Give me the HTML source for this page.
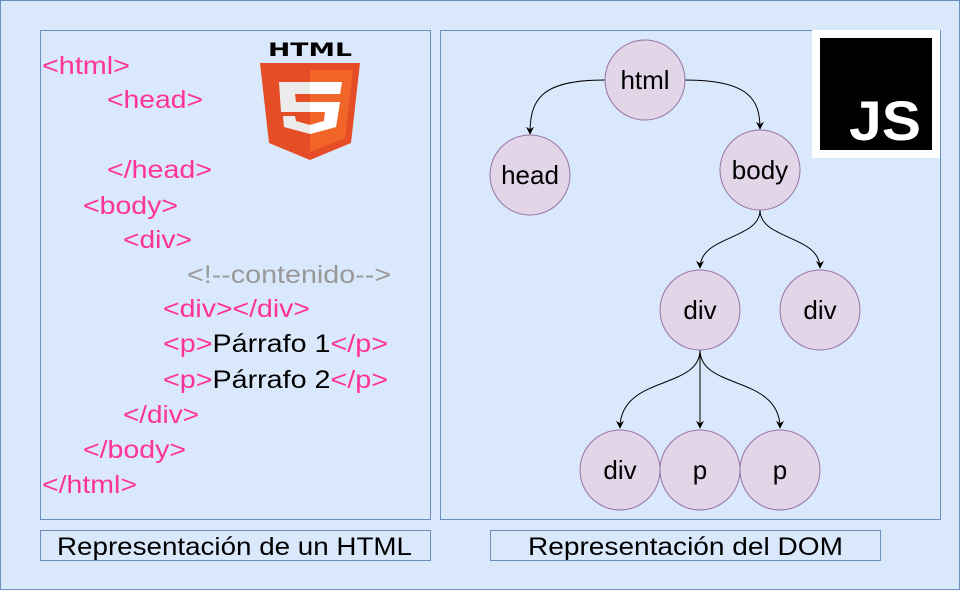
<!DOCTYPE html>
<html><head><meta charset="utf-8"><style>html,body{margin:0;padding:0;background:#fff}svg{display:block}</style></head>
<body>
<svg width="961" height="591" viewBox="0 0 961 591" xmlns="http://www.w3.org/2000/svg" font-family="Liberation Sans, Arial, sans-serif">
<defs>
<marker id="a" viewBox="0 0 10 10" refX="9" refY="5" markerWidth="8" markerHeight="8" orient="auto"><path d="M0,0 L10,5 L0,10 L3,5 z" fill="#000"/></marker>
<clipPath id="rh"><rect x="310" y="0" width="60" height="200"/></clipPath>
</defs>
<rect x="0.5" y="0.5" width="959" height="589" fill="#dae8fc" stroke="#6c8ebf"/>
<rect x="40.5" y="30.5" width="390" height="489" fill="#dae8fc" stroke="#6c8ebf"/>
<rect x="440.5" y="30.5" width="500" height="489" fill="#dae8fc" stroke="#6c8ebf"/>
<rect x="40.5" y="530.5" width="390" height="30" fill="#dae8fc" stroke="#6c8ebf"/>
<rect x="490.5" y="530.5" width="390" height="30" fill="#dae8fc" stroke="#6c8ebf"/>
<text x="57" y="555" font-size="25" textLength="355" lengthAdjust="spacingAndGlyphs">Representación de un HTML</text>
<text x="528" y="555" font-size="25" textLength="315" lengthAdjust="spacingAndGlyphs">Representación del DOM</text>

<g font-size="25" fill="#ff3399">
<text x="42" y="74" textLength="88" lengthAdjust="spacingAndGlyphs">&lt;html&gt;</text>
<text x="107" y="108" textLength="96" lengthAdjust="spacingAndGlyphs">&lt;head&gt;</text>
<text x="107" y="178" textLength="105" lengthAdjust="spacingAndGlyphs">&lt;/head&gt;</text>
<text x="83" y="214" textLength="95" lengthAdjust="spacingAndGlyphs">&lt;body&gt;</text>
<text x="123" y="248" textLength="69" lengthAdjust="spacingAndGlyphs">&lt;div&gt;</text>
<text x="187" y="283" textLength="204" lengthAdjust="spacingAndGlyphs" fill="#999">&lt;!--contenido--&gt;</text>
<text x="163" y="317" textLength="147" lengthAdjust="spacingAndGlyphs">&lt;div&gt;&lt;/div&gt;</text>
<text x="163" y="352" textLength="225" lengthAdjust="spacingAndGlyphs">&lt;p&gt;<tspan fill="#000">Párrafo 1</tspan>&lt;/p&gt;</text>
<text x="163" y="388" textLength="225" lengthAdjust="spacingAndGlyphs">&lt;p&gt;<tspan fill="#000">Párrafo 2</tspan>&lt;/p&gt;</text>
<text x="123" y="423" textLength="76" lengthAdjust="spacingAndGlyphs">&lt;/div&gt;</text>
<text x="83" y="458" textLength="103" lengthAdjust="spacingAndGlyphs">&lt;/body&gt;</text>
<text x="42" y="493" textLength="95" lengthAdjust="spacingAndGlyphs">&lt;/html&gt;</text>
</g>

<text x="268" y="56" font-size="19" font-weight="bold" font-family="DejaVu Sans, sans-serif" textLength="84" lengthAdjust="spacingAndGlyphs" fill="#000">HTML</text>
<polygon points="260,63 360,63 351,143 310,160 269,143" fill="#e44d26"/>
<polygon points="310,70 353,70 345,138 310,152" fill="#f16529"/>
<polygon points="279,82 342,82 340,94 295,94 296,102 340,102 336,127 310,134 284,127 283,116 295,116 296,121 310,125 324,121 325,112 281,112" fill="#ebebeb"/>
<polygon points="279,82 342,82 340,94 295,94 296,102 340,102 336,127 310,134 284,127 283,116 295,116 296,121 310,125 324,121 325,112 281,112" fill="#fff" clip-path="url(#rh)"/>

<rect x="812" y="30" width="128" height="128" fill="#fff"/>
<rect x="820" y="38" width="112" height="112" fill="#000"/>
<text x="849" y="140" font-size="56" font-weight="bold" fill="#fff" font-family="Liberation Sans, sans-serif" textLength="72" lengthAdjust="spacingAndGlyphs">JS</text>

<g fill="none" stroke="#000" stroke-width="1" marker-end="url(#a)">
<path d="M605,80 C540,80 530,100 530,134"/>
<path d="M685,80 C750,80 760,100 760,129"/>
<path d="M760,210 C760,240 700,235 700,268"/>
<path d="M760,210 C760,240 820,235 820,268"/>
<path d="M700,350 C700,390 620,375 620,428"/>
<path d="M700,350 L700,428"/>
<path d="M700,350 C700,390 780,375 780,428"/>
</g>

<g fill="#e1d5e7" stroke="#9673a6">
<circle cx="645" cy="80" r="40"/>
<circle cx="530" cy="175" r="40"/>
<circle cx="760" cy="170" r="40"/>
<circle cx="700" cy="310" r="40"/>
<circle cx="820" cy="310" r="40"/>
<circle cx="620" cy="470" r="40"/>
<circle cx="700" cy="470" r="40"/>
<circle cx="780" cy="470" r="40"/>
</g>
<g font-size="26" text-anchor="middle" fill="#000">
<text x="645" y="89">html</text>
<text x="530" y="184">head</text>
<text x="760" y="179">body</text>
<text x="700" y="319">div</text>
<text x="820" y="319">div</text>
<text x="620" y="479">div</text>
<text x="700" y="479">p</text>
<text x="780" y="479">p</text>
</g>
</svg>
</body></html>
